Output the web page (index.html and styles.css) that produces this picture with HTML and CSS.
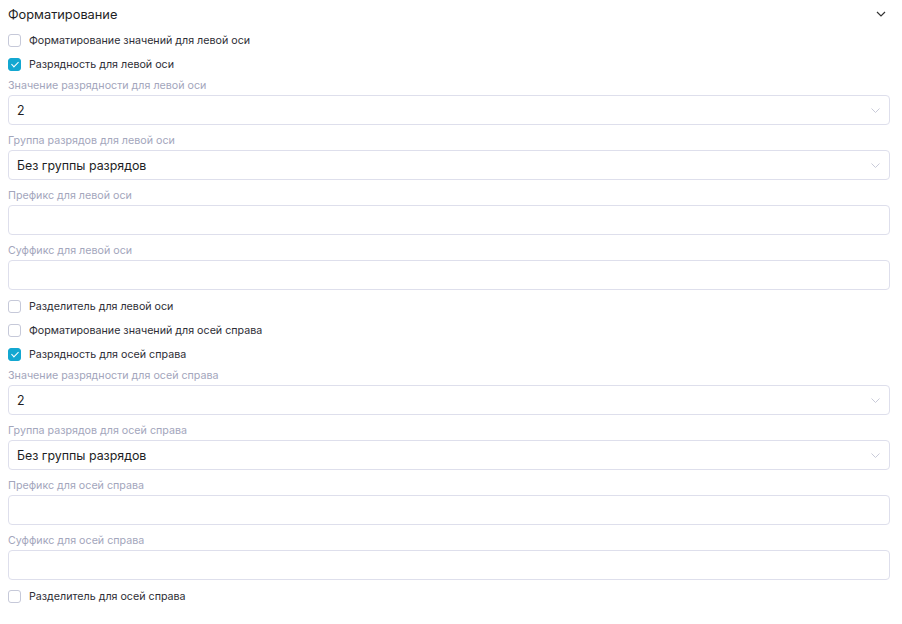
FILE: index.html
```html
<!DOCTYPE html>
<html lang="ru">
<head>
  <meta charset="UTF-8">
  <title>Форматирование</title>
  <link rel="stylesheet" href="styles.css">
</head>
<body>
  <div class="panel">
    <div class="panel-header">
      <span class="panel-title">Форматирование</span>
      <svg class="collapse-icon" width="10" height="6" viewBox="0 0 10 6"><path d="M1 1l4 4 4-4" fill="none" stroke="#333" stroke-width="1.2"/></svg>
    </div>

    <label class="check-row"><span class="box"></span>Форматирование значений для левой оси</label>
    <label class="check-row"><span class="box checked"></span>Разрядность для левой оси</label>

    <div class="field first">
      <div class="field-label">Значение разрядности для левой оси</div>
      <div class="input select">2<svg class="select-arrow" width="9" height="5" viewBox="0 0 9 5"><path d="M0.5 0.5l4 4 4-4" fill="none" stroke="#c9cbd9" stroke-width="1"/></svg></div>
    </div>
    <div class="field">
      <div class="field-label">Группа разрядов для левой оси</div>
      <div class="input select">Без группы разрядов<svg class="select-arrow" width="9" height="5" viewBox="0 0 9 5"><path d="M0.5 0.5l4 4 4-4" fill="none" stroke="#c9cbd9" stroke-width="1"/></svg></div>
    </div>
    <div class="field">
      <div class="field-label">Префикс для левой оси</div>
      <div class="input"></div>
    </div>
    <div class="field">
      <div class="field-label">Суффикс для левой оси</div>
      <div class="input"></div>
    </div>

    <label class="check-row after-field"><span class="box"></span>Разделитель для левой оси</label>
    <label class="check-row"><span class="box"></span>Форматирование значений для осей справа</label>
    <label class="check-row"><span class="box checked"></span>Разрядность для осей справа</label>

    <div class="field first">
      <div class="field-label">Значение разрядности для осей справа</div>
      <div class="input select">2<svg class="select-arrow" width="9" height="5" viewBox="0 0 9 5"><path d="M0.5 0.5l4 4 4-4" fill="none" stroke="#c9cbd9" stroke-width="1"/></svg></div>
    </div>
    <div class="field">
      <div class="field-label">Группа разрядов для осей справа</div>
      <div class="input select">Без группы разрядов<svg class="select-arrow" width="9" height="5" viewBox="0 0 9 5"><path d="M0.5 0.5l4 4 4-4" fill="none" stroke="#c9cbd9" stroke-width="1"/></svg></div>
    </div>
    <div class="field">
      <div class="field-label">Префикс для осей справа</div>
      <div class="input"></div>
    </div>
    <div class="field">
      <div class="field-label">Суффикс для осей справа</div>
      <div class="input"></div>
    </div>

    <label class="check-row after-field"><span class="box"></span>Разделитель для осей справа</label>
  </div>
</body>
</html>
```

FILE: styles.css
```css
body {
  margin: 0;
  padding: 0 8px;
  background: #fff;
  font-family: Inter, "Noto Sans", sans-serif;
  color: #2b2b33;
}
.panel {
  width: 882px;
}
.panel-header {
  height: 28px;
  display: flex;
  align-items: center;
  justify-content: space-between;
  padding-right: 4px;
}
.panel-title {
  font-size: 12.8px;
  color: #1e1e24;
}
.collapse-icon {
  display: block;
}
.check-row {
  height: 24px;
  display: flex;
  align-items: center;
  font-size: 10.7px;
  color: #2e2e36;
}
.check-row.after-field {
  margin-top: 4px;
}
.box {
  width: 11px;
  height: 11px;
  border: 1px solid #c6c9d9;
  border-radius: 3px;
  margin-right: 8px;
  position: relative;
  flex-shrink: 0;
}
.box.checked {
  background: #13a7d1;
  border-color: #13a7d1;
}
.box.checked::after {
  content: "";
  position: absolute;
  left: 3.5px;
  top: 1px;
  width: 3px;
  height: 6px;
  border: solid #fff;
  border-width: 0 1.5px 1.5px 0;
  transform: rotate(45deg);
}
.field {
  padding-top: 8px;
}
.field.first {
  padding-top: 2px;
}
.field-label {
  height: 16px;
  line-height: 16px;
  margin-bottom: 1px;
  font-size: 10.7px;
  color: #a3a6bc;
}
.input {
  height: 28px;
  border: 1px solid #dedfec;
  border-radius: 4px;
  padding: 0 8px;
  display: flex;
  align-items: center;
  font-size: 12.4px;
  color: #1e1e24;
}
.select {
  justify-content: space-between;
}
.select-arrow {
  display: block;
  margin-right: 1px;
}
```
